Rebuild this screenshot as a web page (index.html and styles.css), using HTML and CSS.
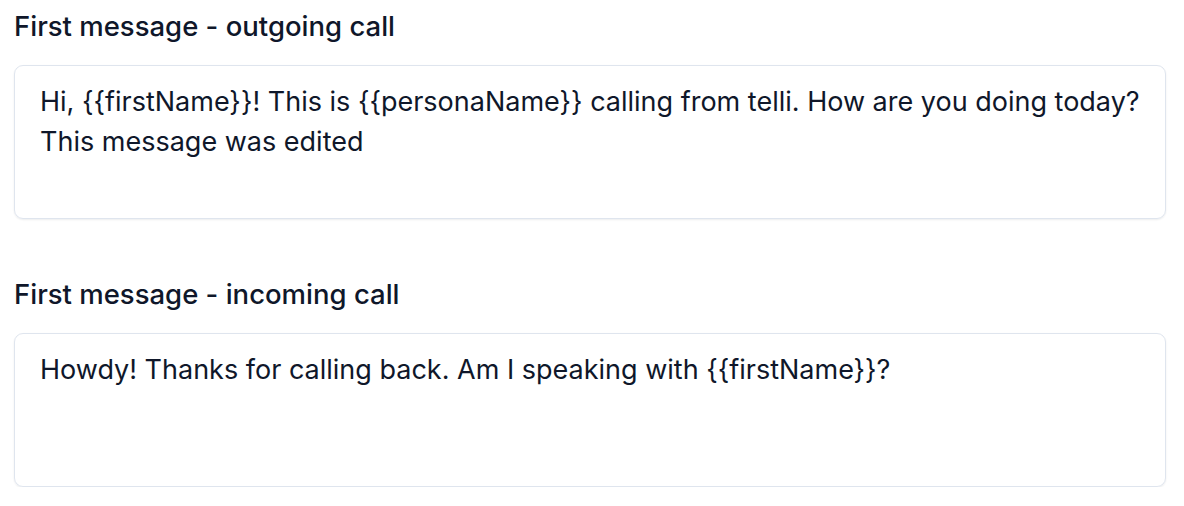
FILE: index.html
```html
<!DOCTYPE html>
<html lang="en">
<head>
<meta charset="utf-8">
<title>First messages</title>
<link rel="stylesheet" href="styles.css">
</head>
<body>
<main class="page">
  <section class="field">
    <label class="field-label">First message - outgoing call</label>
    <div class="field-box">Hi, {{firstName}}! This is {{personaName}} calling from telli. How are you doing today?<br>This message was edited</div>
  </section>
  <section class="field">
    <label class="field-label">First message - incoming call</label>
    <div class="field-box">Howdy! Thanks for calling back. Am I speaking with {{firstName}}?</div>
  </section>
</main>
</body>
</html>
```

FILE: styles.css
```css
html, body {
  margin: 0;
  padding: 0;
  background: #ffffff;
}

.page {
  padding: 6px 18px 0 14px;
  font-family: Inter, "Liberation Sans", sans-serif;
  color: #0f172a;
  display: flex;
  flex-direction: column;
  gap: 55px;
}

.field {
  display: flex;
  flex-direction: column;
}

.field-label {
  font-size: 27.5px;
  line-height: 40px;
  font-weight: 500;
  margin-bottom: 19px;
}

.field-box {
  border: 1px solid #dfe5ee;
  border-radius: 9px;
  box-shadow: 0 1px 2px rgba(15, 23, 42, 0.08);
  padding: 16px 24px 16px 25px;
  font-size: 27px;
  line-height: 40px;
  min-height: 120px;
}
```
